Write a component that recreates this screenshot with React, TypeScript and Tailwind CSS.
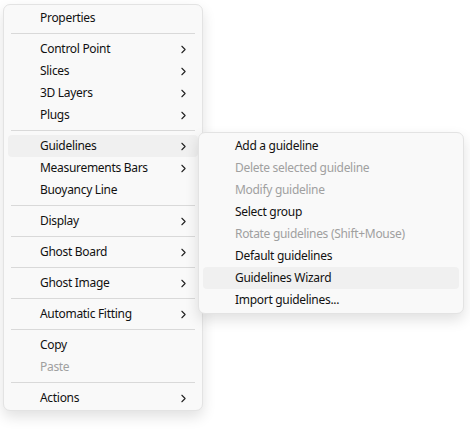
import { ChevronRight } from 'lucide-react'

type Item = { label: string; sub?: boolean; disabled?: boolean; active?: boolean } | 'sep'

const mainItems: Item[] = [
  { label: 'Properties' },
  'sep',
  { label: 'Control Point', sub: true },
  { label: 'Slices', sub: true },
  { label: '3D Layers', sub: true },
  { label: 'Plugs', sub: true },
  'sep',
  { label: 'Guidelines', sub: true, active: true },
  { label: 'Measurements Bars', sub: true },
  { label: 'Buoyancy Line' },
  'sep',
  { label: 'Display', sub: true },
  'sep',
  { label: 'Ghost Board', sub: true },
  'sep',
  { label: 'Ghost Image', sub: true },
  'sep',
  { label: 'Automatic Fitting', sub: true },
  'sep',
  { label: 'Copy' },
  { label: 'Paste', disabled: true },
  'sep',
  { label: 'Actions', sub: true },
]

const guideItems: Item[] = [
  { label: 'Add a guideline' },
  { label: 'Delete selected guideline', disabled: true },
  { label: 'Modify guideline', disabled: true },
  { label: 'Select group' },
  { label: 'Rotate guidelines (Shift+Mouse)', disabled: true },
  { label: 'Default guidelines' },
  { label: 'Guidelines Wizard', active: true },
  { label: 'Import guidelines...' },
]

function MenuRows({ items }: { items: Item[] }) {
  return (
    <>
      {items.map((it, i) =>
        it === 'sep' ? (
          <div key={i} className="py-[4px] px-[7px]">
            <div className="h-px bg-[#d9d9d9]" />
          </div>
        ) : (
          <div
            key={i}
            className={`mx-[4px] flex h-[22px] items-center rounded-[4px] pl-[32px] pr-[8px] ${
              it.active ? 'bg-[#f0f0f0]' : ''
            } ${it.disabled ? 'text-[#a0a0a0]' : 'text-[#111]'}`}
          >
            <span className="flex-1 whitespace-nowrap tracking-[-0.3px]">{it.label}</span>
            {it.sub && <ChevronRight size={13} strokeWidth={2} className="text-[#222]" />}
          </div>
        ),
      )}
    </>
  )
}

export default function App() {
  return (
    <div
      className="relative h-[430px] w-[470px] bg-white text-[12px]"
      style={{ fontFamily: '"Noto Sans", "Open Sans", sans-serif' }}
    >
      <div className="absolute left-[3px] top-[4px] w-[200px] rounded-[7px] border border-[#e3e3e3] bg-[#f9f9f9] pt-[2px] pb-[1px] shadow-[0_6px_14px_rgba(0,0,0,0.12)]">
        <MenuRows items={mainItems} />
      </div>
      <div className="absolute left-[198px] top-[132px] w-[266px] rounded-[7px] border border-[#e3e3e3] bg-[#f9f9f9] py-[2px] shadow-[0_6px_14px_rgba(0,0,0,0.12)]">
        <MenuRows items={guideItems} />
      </div>
    </div>
  )
}
